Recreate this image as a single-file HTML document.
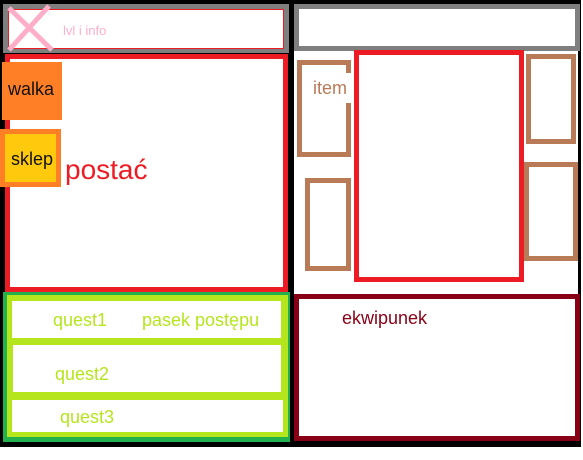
<!DOCTYPE html>
<html><head><meta charset="utf-8"><style>
*{margin:0;padding:0}
body{width:583px;height:460px;background:#fff;position:relative;overflow:hidden;font-family:"Liberation Sans",sans-serif}
div{position:absolute;box-sizing:border-box}
.t{white-space:nowrap;line-height:1}
</style></head><body>
<div style="left:0;top:0;width:581px;height:447px;background:#000"></div>
<!-- left top gray -->
<div style="left:3px;top:4px;width:286px;height:49px;background:#fff;border:5px solid #7f7f7f"></div>
<div style="left:8px;top:9px;width:276px;height:40px;border:1px solid #ed1c24"></div>
<svg style="position:absolute;left:0;top:0" width="60" height="60"><path d="M9 8 L52 50 M49 6 L9 50" stroke="#ffaec9" stroke-width="5"/></svg>
<div class="t" style="left:63px;top:24px;font-size:13px;color:#ffaec9">lvl i info</div>
<!-- postac -->
<div style="left:5px;top:54px;width:283px;height:238px;background:#fff;border:5px solid #ed1c24"></div>
<div style="left:2px;top:62px;width:60px;height:58px;background:#ff7f27"></div>
<div class="t" style="left:8px;top:80px;font-size:18px;color:#111">walka</div>
<div style="left:0;top:129px;width:61px;height:58px;background:#ffc90e;border:5px solid #ff7f27"></div>
<div class="t" style="left:11px;top:150px;font-size:18px;color:#111">sklep</div>
<div class="t" style="left:65px;top:156px;font-size:28px;color:#ed1c24">postać</div>
<!-- quests -->
<div style="left:3px;top:292px;width:287px;height:150px;background:#22b14c"></div>
<div style="left:7px;top:295px;width:281px;height:142px;background:#b5e61d"></div>
<div style="left:12px;top:301px;width:269px;height:37px;background:#fff"></div>
<div style="left:13px;top:345px;width:268px;height:47px;background:#fff"></div>
<div style="left:12px;top:400px;width:271px;height:32px;background:#fff"></div>
<div class="t" style="left:53px;top:311px;font-size:18px;color:#b5e61d">quest1</div>
<div class="t" style="left:142px;top:311px;font-size:18px;color:#b5e61d">pasek postępu</div>
<div class="t" style="left:55px;top:365px;font-size:18px;color:#b5e61d">quest2</div>
<div class="t" style="left:60px;top:408px;font-size:18px;color:#b5e61d">quest3</div>
<!-- right -->
<div style="left:294px;top:4px;width:286px;height:47px;background:#fff;border:5px solid #7f7f7f"></div>
<div style="left:294px;top:51px;width:284px;height:243px;background:#fff"></div>
<div style="left:297px;top:60px;width:54px;height:97px;border:5px solid #b97a57"></div>
<div style="left:346px;top:73px;width:6px;height:30px;background:#fff"></div>
<div class="t" style="left:313px;top:79px;font-size:18px;color:#b97a57">item</div>
<div style="left:305px;top:178px;width:46px;height:93px;border:5px solid #b97a57"></div>
<div style="left:354px;top:50px;width:170px;height:232px;border:5px solid #ed1c24"></div>
<div style="left:526px;top:54px;width:50px;height:90px;border:5px solid #b97a57"></div>
<div style="left:524px;top:162px;width:54px;height:99px;border:5px solid #b97a57"></div>
<div style="left:294px;top:294px;width:286px;height:147px;background:#fff;border:5px solid #880015"></div>
<div class="t" style="left:342px;top:309px;font-size:18px;color:#880015">ekwipunek</div>
</body></html>
